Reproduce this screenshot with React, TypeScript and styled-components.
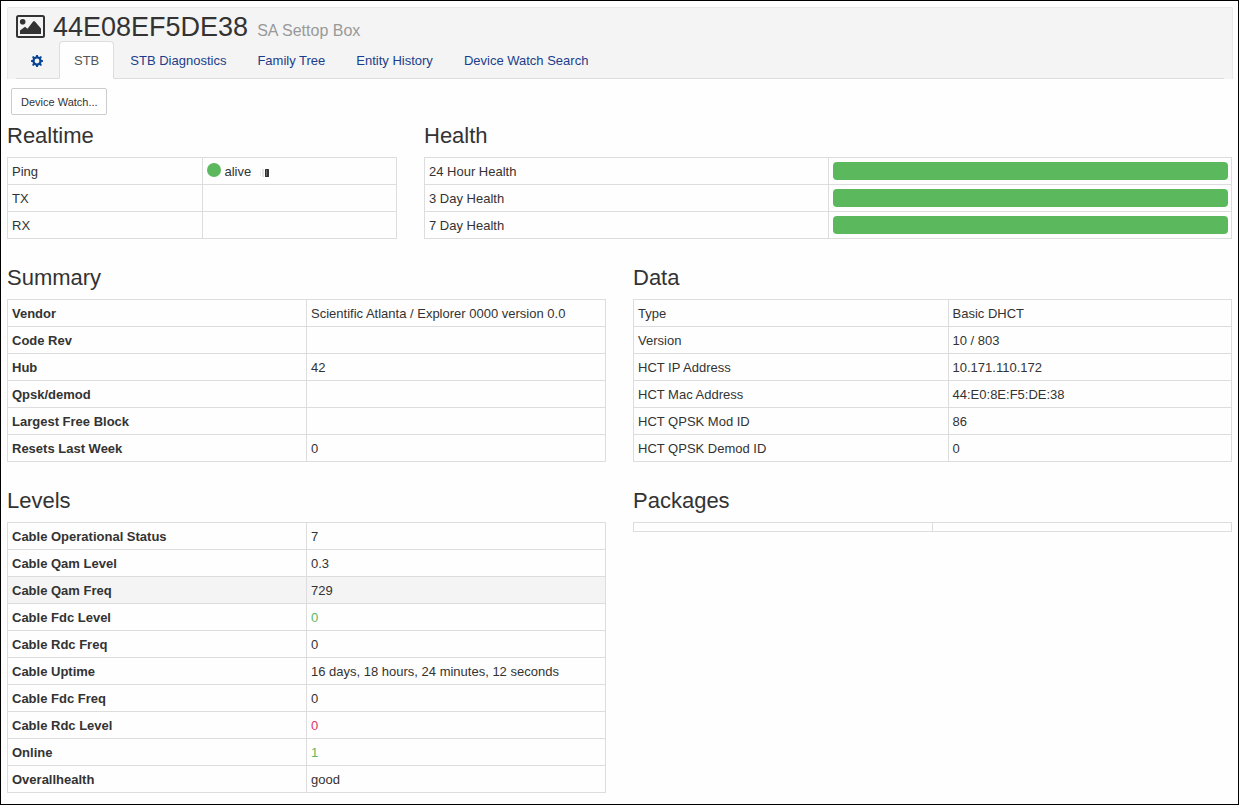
import React from "react";
import styled, { createGlobalStyle } from "styled-components";

const GlobalStyle = createGlobalStyle`
  * { box-sizing: border-box; }
  body {
    margin: 0;
    background: #fefefe;
    color: #333;
    font: 13px/18px "Liberation Sans", Arial, sans-serif;
  }
`;

const Page = styled.div`
  min-height: 100vh;
  padding: 6px 5px 10px 6px;
  border: 1px solid #000;
`;

const Header = styled.header`
  height: 72px;
  padding: 0 8px;
  background: #f4f4f4;
  border: 1px solid #e9e9e9;
  border-bottom: 0;
  border-radius: 2px 2px 0 0;
`;

const Title = styled.h1`
  display: flex;
  align-items: baseline;
  height: 33px;
  margin: 0;
  font-size: 27px;
  font-weight: normal;
  line-height: 38px;
`;

const PictureIcon = styled.svg`
  flex: none;
  align-self: flex-start;
  width: 29px;
  height: 23px;
  margin: 7px 8px 0 0;
`;

const Subtitle = styled.small`
  margin-left: 9px;
  color: #999;
  font-size: 16px;
`;

const Tabs = styled.nav`
  display: flex;
  gap: 1px;
  height: 38px;
  border-bottom: 1px solid #ddd;
`;

const Tab = styled.a<{ $active?: boolean }>`
  display: flex;
  align-items: center;
  height: 38px;
  padding: 2px 14px 0;
  border: 1px solid ${(p) => (p.$active ? "#ddd" : "transparent")};
  border-bottom-color: ${(p) => (p.$active ? "#fefefe" : "#ddd")};
  border-radius: 4px 4px 0 0;
  background: ${(p) => (p.$active ? "#fefefe" : "transparent")};
  color: ${(p) => (p.$active ? "#555" : "#1a3e8c")};
  text-decoration: none;
  white-space: nowrap;
`;

const GearIcon = styled.svg`
  width: 12px;
  height: 12px;
  fill: #0a4593;
`;

const WatchButton = styled.button`
  display: block;
  height: 27px;
  margin: 9px 4px 8px;
  padding: 0 8px 0 9px;
  background: #fff;
  border: 1px solid #ccc;
  border-radius: 2px;
  color: #333;
  font: 11px/16px "Liberation Sans", Arial, sans-serif;
`;

const Row = styled.div<{ $columns: string }>`
  display: grid;
  grid-template-columns: ${(p) => p.$columns};
  gap: 27px;
  align-items: start;
  margin: 0 1px 26px 0;

  &:last-child { margin-bottom: 0; }
`;

const Heading = styled.h2`
  margin: 0 0 8px;
  font-size: 22px;
  font-weight: normal;
  line-height: 26px;
`;

const Table = styled.table`
  width: 100%;
  table-layout: fixed;
  border-collapse: collapse;
`;

const cell = `
  padding: 5px 4px 3px;
  border: 1px solid #ddd;
  text-align: left;
  vertical-align: top;
`;

const LabelCell = styled.th<{ $bold?: boolean; $width: string }>`
  ${cell}
  width: ${(p) => p.$width};
  font-weight: ${(p) => (p.$bold ? "bold" : "normal")};
`;

const ValueCell = styled.td<{ $color?: string; $bar?: boolean }>`
  ${cell}
  ${(p) => p.$bar && "padding: 4px 3px 4px 4px;"}
  color: ${(p) => p.$color ?? "inherit"};
`;

const TableRow = styled.tr<{ $highlight?: boolean }>`
  background: ${(p) => (p.$highlight ? "#f4f4f4" : "transparent")};
`;

const HealthBar = styled.div`
  height: 18px;
  background: #5cb85c;
  border-radius: 4px;
`;

const Status = styled.span`
  display: flex;
  align-items: center;
`;

const StatusDot = styled.span`
  width: 14px;
  height: 14px;
  margin: 0 4px 4px 0;
  border-radius: 50%;
  background: #5cb85c;
`;

const Activity = styled.svg`
  width: 10px;
  height: 8px;
  margin: 2px 0 0 9px;
`;

type Entry = {
  label: string;
  value?: React.ReactNode;
  color?: string;
  highlight?: boolean;
};

const realtime: Entry[] = [
  {
    label: "Ping",
    value: (
      <Status>
        <StatusDot />
        alive
        <Activity viewBox="0 0 10 8" aria-hidden="true">
          <rect x="0" y="1" width="1" height="6" fill="#eee" />
          <rect x="2" y="0" width="2" height="8" fill="#e4e4e4" />
          <rect x="5" y="0" width="4" height="8" rx="0.5" fill="#333" />
          <rect x="6" y="1" width="1" height="6" fill="#666" />
        </Activity>
      </Status>
    ),
  },
  { label: "TX" },
  { label: "RX" },
];

const health: Entry[] = ["24 Hour Health", "3 Day Health", "7 Day Health"].map((label) => ({
  label,
  value: <HealthBar />,
}));

const summary: Entry[] = [
  { label: "Vendor", value: "Scientific Atlanta / Explorer 0000 version 0.0" },
  { label: "Code Rev" },
  { label: "Hub", value: "42" },
  { label: "Qpsk/demod" },
  { label: "Largest Free Block" },
  { label: "Resets Last Week", value: "0" },
];

const data: Entry[] = [
  { label: "Type", value: "Basic DHCT" },
  { label: "Version", value: "10 / 803" },
  { label: "HCT IP Address", value: "10.171.110.172" },
  { label: "HCT Mac Address", value: "44:E0:8E:F5:DE:38" },
  { label: "HCT QPSK Mod ID", value: "86" },
  { label: "HCT QPSK Demod ID", value: "0" },
];

const levels: Entry[] = [
  { label: "Cable Operational Status", value: "7" },
  { label: "Cable Qam Level", value: "0.3" },
  { label: "Cable Qam Freq", value: "729", highlight: true },
  { label: "Cable Fdc Level", value: "0", color: "#5cb85c" },
  { label: "Cable Rdc Freq", value: "0" },
  { label: "Cable Uptime", value: "16 days, 18 hours, 24 minutes, 12 seconds" },
  { label: "Cable Fdc Freq", value: "0" },
  { label: "Cable Rdc Level", value: "0", color: "#dc3565" },
  { label: "Online", value: "1", color: "#5cb85c" },
  { label: "Overallhealth", value: "good" },
];

const packages: Entry[] = [{ label: "" }];

function Panel({
  title,
  entries,
  bold,
  bars,
  labelWidth = "50%",
}: {
  title: string;
  entries: Entry[];
  bold?: boolean;
  bars?: boolean;
  labelWidth?: string;
}) {
  return (
    <section>
      <Heading>{title}</Heading>
      <Table aria-label={title}>
        <tbody>
          {entries.map((entry) => (
            <TableRow key={entry.label} $highlight={entry.highlight}>
              <LabelCell scope="row" $bold={bold} $width={labelWidth}>
                {entry.label}
              </LabelCell>
              <ValueCell $color={entry.color} $bar={bars}>
                {entry.value}
              </ValueCell>
            </TableRow>
          ))}
        </tbody>
      </Table>
    </section>
  );
}

export default function App() {
  return (
    <Page>
      <GlobalStyle />
      <Header>
        <Title>
          <PictureIcon viewBox="0 0 29 23" aria-hidden="true">
            <rect x="1" y="1" width="27" height="21" rx="1.5" fill="none" stroke="#333" strokeWidth="2" />
            <circle cx="6.7" cy="6.7" r="2.8" fill="#333" />
            <path d="M4 19v-3.5l5-3.8 2.5 2 5.8-7.4h1.4L25 13.5V19z" fill="#333" />
          </PictureIcon>
          44E08EF5DE38
          <Subtitle>SA Settop Box</Subtitle>
        </Title>
        <Tabs>
          <Tab href="#settings" aria-label="Settings">
            <GearIcon viewBox="0 0 12 12" aria-hidden="true">
              <path
                fillRule="evenodd"
                d="M5.2 0h1.6l.5 1.6 1 .4 1.6-.9 1 1-.9 1.6.4 1 1.6.5v1.6l-1.6.5-.4 1 .9 1.6-1 1-1.6-.9-1 .4-.5 1.6H5.2l-.5-1.6-1-.4-1.6.9-1-1 .9-1.6-.4-1L0 6.800V5.200l1.600-.5.4-1-.9-1.600 1-1 1.600.9 1-.4zM6 3.600a2.400 2.400 0 1 0 0 4.800a2.400 2.400 0 1 0 0-4.800z"
              />
            </GearIcon>
          </Tab>
          <Tab href="#stb" $active aria-current="page">STB</Tab>
          <Tab href="#diagnostics">STB Diagnostics</Tab>
          <Tab href="#family">Family Tree</Tab>
          <Tab href="#history">Entity History</Tab>
          <Tab href="#search">Device Watch Search</Tab>
        </Tabs>
      </Header>
      <main>
        <WatchButton type="button">Device Watch...</WatchButton>
        <Row $columns="390fr 808fr">
          <Panel title="Realtime" entries={realtime} />
          <Panel title="Health" entries={health} bars />
        </Row>
        <Row $columns="1fr 1fr">
          <Panel title="Summary" entries={summary} bold />
          <Panel title="Data" entries={data} labelWidth="52.6%" />
        </Row>
        <Row $columns="1fr 1fr">
          <Panel title="Levels" entries={levels} bold />
          <Panel title="Packages" entries={packages} />
        </Row>
      </main>
    </Page>
  );
}
